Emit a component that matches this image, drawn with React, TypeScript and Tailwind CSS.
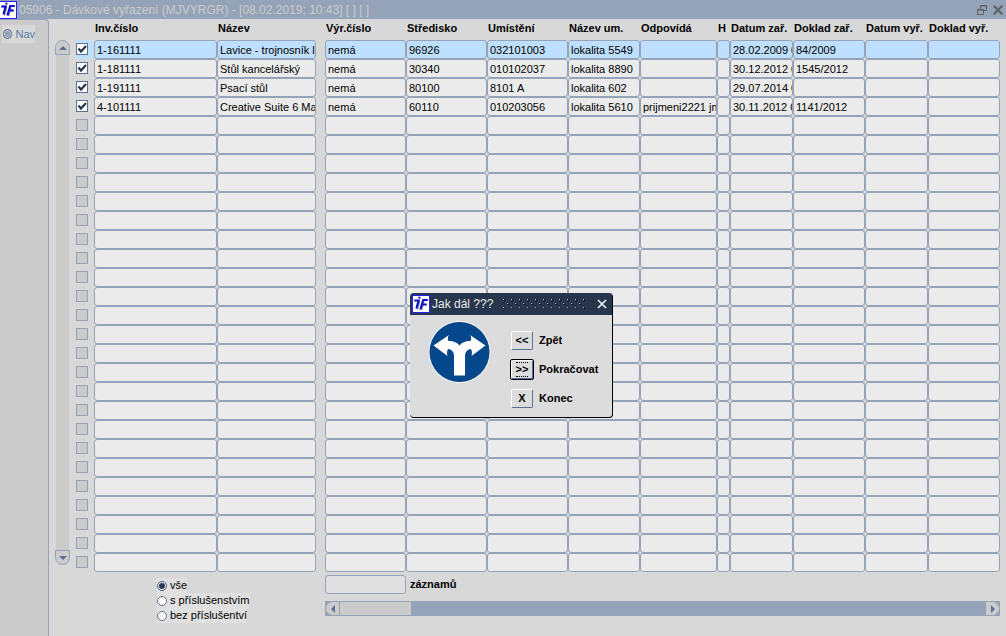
import { useState } from "react";

type Column = { title: string; width: string; group: "left" | "right" };

const columns: Column[] = [
  { title: "Inv.číslo", width: "w-[123px]", group: "left" },
  { title: "Název", width: "w-[99px]", group: "left" },
  { title: "Výr.číslo", width: "w-[81px]", group: "right" },
  { title: "Středisko", width: "w-[81px]", group: "right" },
  { title: "Umístění", width: "w-[81px]", group: "right" },
  { title: "Název um.", width: "w-[72px]", group: "right" },
  { title: "Odpovídá", width: "w-[77px]", group: "right" },
  { title: "H", width: "w-[13px]", group: "right" },
  { title: "Datum zař.", width: "w-[63px]", group: "right" },
  { title: "Doklad zař.", width: "w-[72px]", group: "right" },
  { title: "Datum vyř.", width: "w-[63px]", group: "right" },
  { title: "Doklad vyř.", width: "w-auto", group: "right" },
];

const records: string[][] = [
  ["1-161111", "Lavice - trojnosník lak", "nemá", "96926", "032101003", "lokalita 5549", "", "", "28.02.2009 00:00", "84/2009", "", ""],
  ["1-181111", "Stůl kancelářský", "nemá", "30340", "010102037", "lokalita 8890", "", "", "30.12.2012 00:00", "1545/2012", "", ""],
  ["1-191111", "Psací stůl", "nemá", "80100", "8101 A", "lokalita 602", "", "", "29.07.2014 00:00", "", "", ""],
  ["4-101111", "Creative Suite 6 Master", "nemá", "60110", "010203056", "lokalita 5610", "prijmeni2221 jmeno", "", "30.11.2012 00:00", "1141/2012", "", ""],
];

const rowNumbers = Array.from({ length: 28 }, (_, i) => i);
const leftColumns = columns.filter((c) => c.group === "left");
const rightColumns = columns.filter((c) => c.group === "right");

function Logo() {
  return (
    <svg viewBox="0 0 18 18" className="size-[18px] shrink-0" aria-hidden="true">
      <rect x="0.5" y="0.5" width="17" height="17" fill="#fff" stroke="#2222ff" />
      <g fill="none" stroke="#9a9ab0" strokeWidth="1.500">
        <path d="M7.600 6.500 5.400 14.500" />
        <path d="M12 6.500 9.600 15" />
      </g>
      <g fill="none" stroke="#1010c8" strokeWidth="2.200">
        <path d="M2.300 5.500h5.500" />
        <path d="M6.700 5 4.500 13.500" />
        <path d="M7.600 1.800 7.200 3.400" />
        <path d="M15.800 5h-4.600L8.400 14.500" />
        <path d="M10.500 9.500h4.300" />
      </g>
    </svg>
  );
}

function RowCheck({ index }: { index: number }) {
  const active = index < records.length;
  return (
    <input
      type="checkbox"
      aria-label={`Řádek ${index + 1}`}
      defaultChecked={active}
      disabled={!active}
      className="block size-3 appearance-none border border-[#94a3b8] bg-[#cbcbcb] checked:border-[#5a6f94] checked:bg-white checked:bg-[url('data:image/svg+xml,%3Csvg%20xmlns=%22http://www.w3.org/2000/svg%22%20viewBox=%220%200%2010%2010%22%3E%3Cpath%20d=%22M1.5%204.5%204%207.5%209%202%22%20fill=%22none%22%20stroke=%22%2327364c%22%20stroke-width=%222.2%22/%3E%3C/svg%3E')]"
    />
  );
}

function Cell({ title, row, value }: { title: string; row: number; value: string }) {
  return (
    <td className="p-0">
      <input
        type="text"
        aria-label={`${title} ${row + 1}`}
        defaultValue={value}
        className={`block h-[19px] w-full rounded-[3px] border border-[#94a3b8] pt-px pr-0 pl-[2px] text-[11px] leading-4 text-black outline-none ${
          row === 0 ? "bg-[#bfdfff]" : "bg-[#ebebeb]"
        }`}
      />
    </td>
  );
}

function HeaderCell({ title }: { title: string }) {
  return (
    <th scope="col" className="overflow-visible p-0 pl-px text-left align-top text-[11px] leading-[18px] font-bold whitespace-nowrap">
      {title}
    </th>
  );
}

function Records() {
  return (
    <table className="w-full table-fixed border-collapse">
      <colgroup>
        <col className="w-[18px]" />
        {leftColumns.map((c) => (
          <col key={c.title} className={c.width} />
        ))}
        <col className="w-[9px]" />
        {rightColumns.map((c) => (
          <col key={c.title} className={c.width} />
        ))}
      </colgroup>
      <thead>
        <tr className="h-[21px]">
          <td />
          {leftColumns.map((c) => (
            <HeaderCell key={c.title} title={c.title} />
          ))}
          <td />
          {rightColumns.map((c) => (
            <HeaderCell key={c.title} title={c.title} />
          ))}
        </tr>
      </thead>
      <tbody>
        {rowNumbers.map((row) => (
          <tr key={row} className="h-[19px]">
            <td className="p-0">
              <div className={`flex h-[19px] w-[17px] items-start pt-[3px] ${row === 0 ? "bg-[#bfdfff]" : ""}`}>
                <RowCheck index={row} />
              </div>
            </td>
            {leftColumns.map((c, i) => (
              <Cell key={c.title} title={c.title} row={row} value={records[row]?.[i] ?? ""} />
            ))}
            <td />
            {rightColumns.map((c, i) => (
              <Cell key={c.title} title={c.title} row={row} value={records[row]?.[i + leftColumns.length] ?? ""} />
            ))}
          </tr>
        ))}
      </tbody>
    </table>
  );
}

function VerticalScrollbar() {
  return (
    <div className="mt-[21px] mb-[7px] flex w-[15px] flex-col items-center">
      <button type="button" aria-label="Nahoru" className="flex h-[15px] w-full items-center justify-center rounded-t-full border border-[#94a3b8] bg-[#cbcbcb]">
        <svg viewBox="0 0 8 4" className="h-1 w-2" aria-hidden="true">
          <path d="M0 4 4 0l4 4z" fill="#5a6f94" />
        </svg>
      </button>
      <div className="w-[13px] flex-1 bg-[#cbcbcb]" />
      <button type="button" aria-label="Dolů" className="flex h-[15px] w-full items-center justify-center rounded-b-full border border-[#94a3b8] bg-[#cbcbcb]">
        <svg viewBox="0 0 8 4" className="h-1 w-2" aria-hidden="true">
          <path d="M0 0h8L4 4z" fill="#5a6f94" />
        </svg>
      </button>
    </div>
  );
}

function HorizontalScrollbar() {
  return (
    <div className="flex h-[15px] bg-[#94a3b8] p-px">
      <button type="button" aria-label="Vlevo" className="flex w-[13px] items-center justify-center rounded-l-full bg-[#cbcbcb]">
        <svg viewBox="0 0 4 8" className="h-2 w-1" aria-hidden="true">
          <path d="M4 0v8L0 4z" fill="#5a6f94" />
        </svg>
      </button>
      <div className="ml-px w-[71px] bg-[#cbcbcb]" />
      <button type="button" aria-label="Vpravo" className="ml-auto flex w-[13px] items-center justify-center rounded-r-full bg-[#cbcbcb]">
        <svg viewBox="0 0 4 8" className="h-2 w-1" aria-hidden="true">
          <path d="M0 0v8l4-4z" fill="#5a6f94" />
        </svg>
      </button>
    </div>
  );
}

const filters = ["vše", "s příslušenstvím", "bez příslušentví"];

function Filters() {
  const [selected, setSelected] = useState(filters[0]);
  return (
    <fieldset className="flex w-[168px] flex-col items-start">
      {filters.map((name) => (
        <label key={name} className="flex h-[15px] items-center gap-[3px] bg-[#e0e0e0] text-[11px] leading-[15px]">
          <input
            type="radio"
            name="filter"
            checked={selected === name}
            onChange={() => setSelected(name)}
            className="size-[10px] appearance-none rounded-full border border-[#5a6f94] bg-white checked:bg-[#27364c] checked:shadow-[inset_0_0_0_1px_#fff]"
          />
          {name}
        </label>
      ))}
    </fieldset>
  );
}

function RoadSign() {
  return (
    <svg viewBox="0 0 62 62" className="size-[62px]" role="img" aria-label="Rozcestí">
      <circle cx="30.500" cy="31" r="31" fill="#f4f4f4" />
      <circle cx="30.500" cy="31" r="30" fill="#04478b" />
      <path
        d="M4.500 24.500 20 14c-1.500 2-1.500 4-.5 6 4.500-.3 8.500 1.200 11 4.500 2.500-3.300 6.500-4.800 11-4.500 1-2 1-4-.5-6L56.500 24.500 42.500 35c.8-2.500.5-5-.5-7-4 .5-6 3-6 7.500V54.500H25V35.500c0-4.500-2-7-6-7.500-1 2-1.300 4.500-.5 7z"
        fill="#fff"
      />
    </svg>
  );
}

const choices = [
  { sign: "<<", name: "Zpět", focused: false },
  { sign: ">>", name: "Pokračovat", focused: true },
  { sign: "X", name: "Konec", focused: false },
];

function ChoiceDialog() {
  return (
    <div
      role="dialog"
      aria-label="Jak dál ???"
      className="absolute top-[293px] left-[410px] w-[203px] overflow-hidden rounded-[4px] border-r border-b border-black bg-[#dcdcdc]"
    >
      <div className="flex h-[22px] items-center bg-[#27364c] pr-[5px] pl-[2px] text-[12px] text-[#ebebeb]">
        <Logo />
        <span className="ml-[2px]">Jak dál ???</span>
        <svg className="ml-[10px] h-3 flex-1" aria-hidden="true">
          <defs>
            <pattern id="grip" width="8" height="8" patternUnits="userSpaceOnUse">
              <path d="M0 1h1v1H0zM4 5h1v1H4z" fill="#aebccf" />
              <path d="M1 2h1v1H1zM5 6h1v1H5z" fill="#000" />
            </pattern>
          </defs>
          <rect width="100%" height="100%" fill="url(#grip)" />
        </svg>
        <button type="button" aria-label="Zavřít" className="ml-[10px] flex size-[10px] items-center justify-center">
          <svg viewBox="0 0 10 10" className="size-[10px]" aria-hidden="true">
            <path d="m1 1 8 8M9 1 1 9" stroke="#f0f0f0" strokeWidth="1.700" />
          </svg>
        </button>
      </div>
      <div className="flex h-[102px] items-start pt-[6px] pl-[19px]">
        <RoadSign />
        <div className="ml-[19px] flex flex-col gap-[7px] pt-2">
          {choices.map((c) => (
            <div key={c.name} className="flex h-[22px] items-center gap-[5px]">
              <button
                id={`choice-${c.name}`}
                type="button"
                className={
                  c.focused
                    ? "flex h-[21px] w-6 items-center justify-center rounded-[2px] border border-black bg-[#dcdcdc] text-[11px] font-bold shadow-[inset_1px_1px_0_#fff,inset_-1px_-1px_0_#5a6f94]"
                    : "mx-px flex h-[19px] w-[22px] items-center justify-center rounded-[2px] border border-t-white border-r-[#5a6f94] border-b-[#5a6f94] border-l-white text-[11px] font-bold"
                }
              >
                <span className={c.focused ? "border-y border-dotted border-black leading-[13px]" : ""}>{c.sign}</span>
              </button>
              <label htmlFor={`choice-${c.name}`} className="text-[11px] font-bold">
                {c.name}
              </label>
            </div>
          ))}
        </div>
      </div>
    </div>
  );
}

export default function App() {
  return (
    <div className="relative flex min-h-screen flex-col bg-[#d8d8d8] font-['Liberation_Sans',Arial,sans-serif] text-[11px] text-black">
      <header className="flex h-[19px] items-center bg-[#94a3b8] pr-[2px]">
        <div className="-ml-px flex">
          <Logo />
        </div>
        <h1 className="ml-[2px] text-[12px] whitespace-pre text-[#cbcbcb]">05906 - Dávkové vyřazení (MJVYRGR) - [08.02.2019; 10:43] [ ] [ ]</h1>
        <div className="ml-auto flex items-center gap-[6px] pr-px">
          <button type="button" aria-label="Obnovit">
            <svg viewBox="0 0 10 10" className="block size-[10px]" fill="none" stroke="#5f6368" aria-hidden="true">
              <path d="M3.500 4V0.500h6v5H7M3 1h7" />
              <path d="M0.500 4.500h6v5h-6zM0 5h7" />
            </svg>
          </button>
          <button type="button" aria-label="Zavřít okno">
            <svg viewBox="0 0 10 10" className="block size-[10px]" aria-hidden="true">
              <path d="m.7.7 8.600 8.600M9.300.7.7 9.300" stroke="#5f6368" strokeWidth="2.200" />
            </svg>
          </button>
        </div>
      </header>
      <div className="flex flex-1">
        <nav className="w-[49px] shrink-0 rounded-tr-[4px] border-t border-r border-[#94a3b8] bg-[#cbcbcb] pt-[5px] pl-[2px]">
          <label className="flex h-[18px] w-[33px] items-center gap-[3px] bg-[#d8d8d8] text-[11px] text-[#5a7a9e]">
            <input type="radio" className="ml-px size-[10px] appearance-none rounded-full border border-[#5a6f94] bg-[#94a3b8] shadow-[inset_0_0_0_1px_#cbcbcb]" />
            Nav
          </label>
        </nav>
        <main className="min-w-0 flex-1 px-[6px]">
          <div className="flex gap-[6px]">
            <VerticalScrollbar />
            <div className="min-w-0 flex-1">
              <Records />
            </div>
          </div>
          <div className="flex pt-[3px] pl-[102px]">
            <div className="pt-[3px]">
              <Filters />
            </div>
            <div className="flex min-w-0 flex-1 flex-col gap-[7px]">
              <div className="flex items-center gap-1">
                <input id="count" type="text" className="h-[19px] w-[81px] rounded-[3px] border border-[#94a3b8] bg-[#e0e0e0] px-[2px]" />
                <label htmlFor="count" className="font-bold">
                  záznamů
                </label>
              </div>
              <HorizontalScrollbar />
            </div>
          </div>
        </main>
      </div>
      <ChoiceDialog />
    </div>
  );
}
